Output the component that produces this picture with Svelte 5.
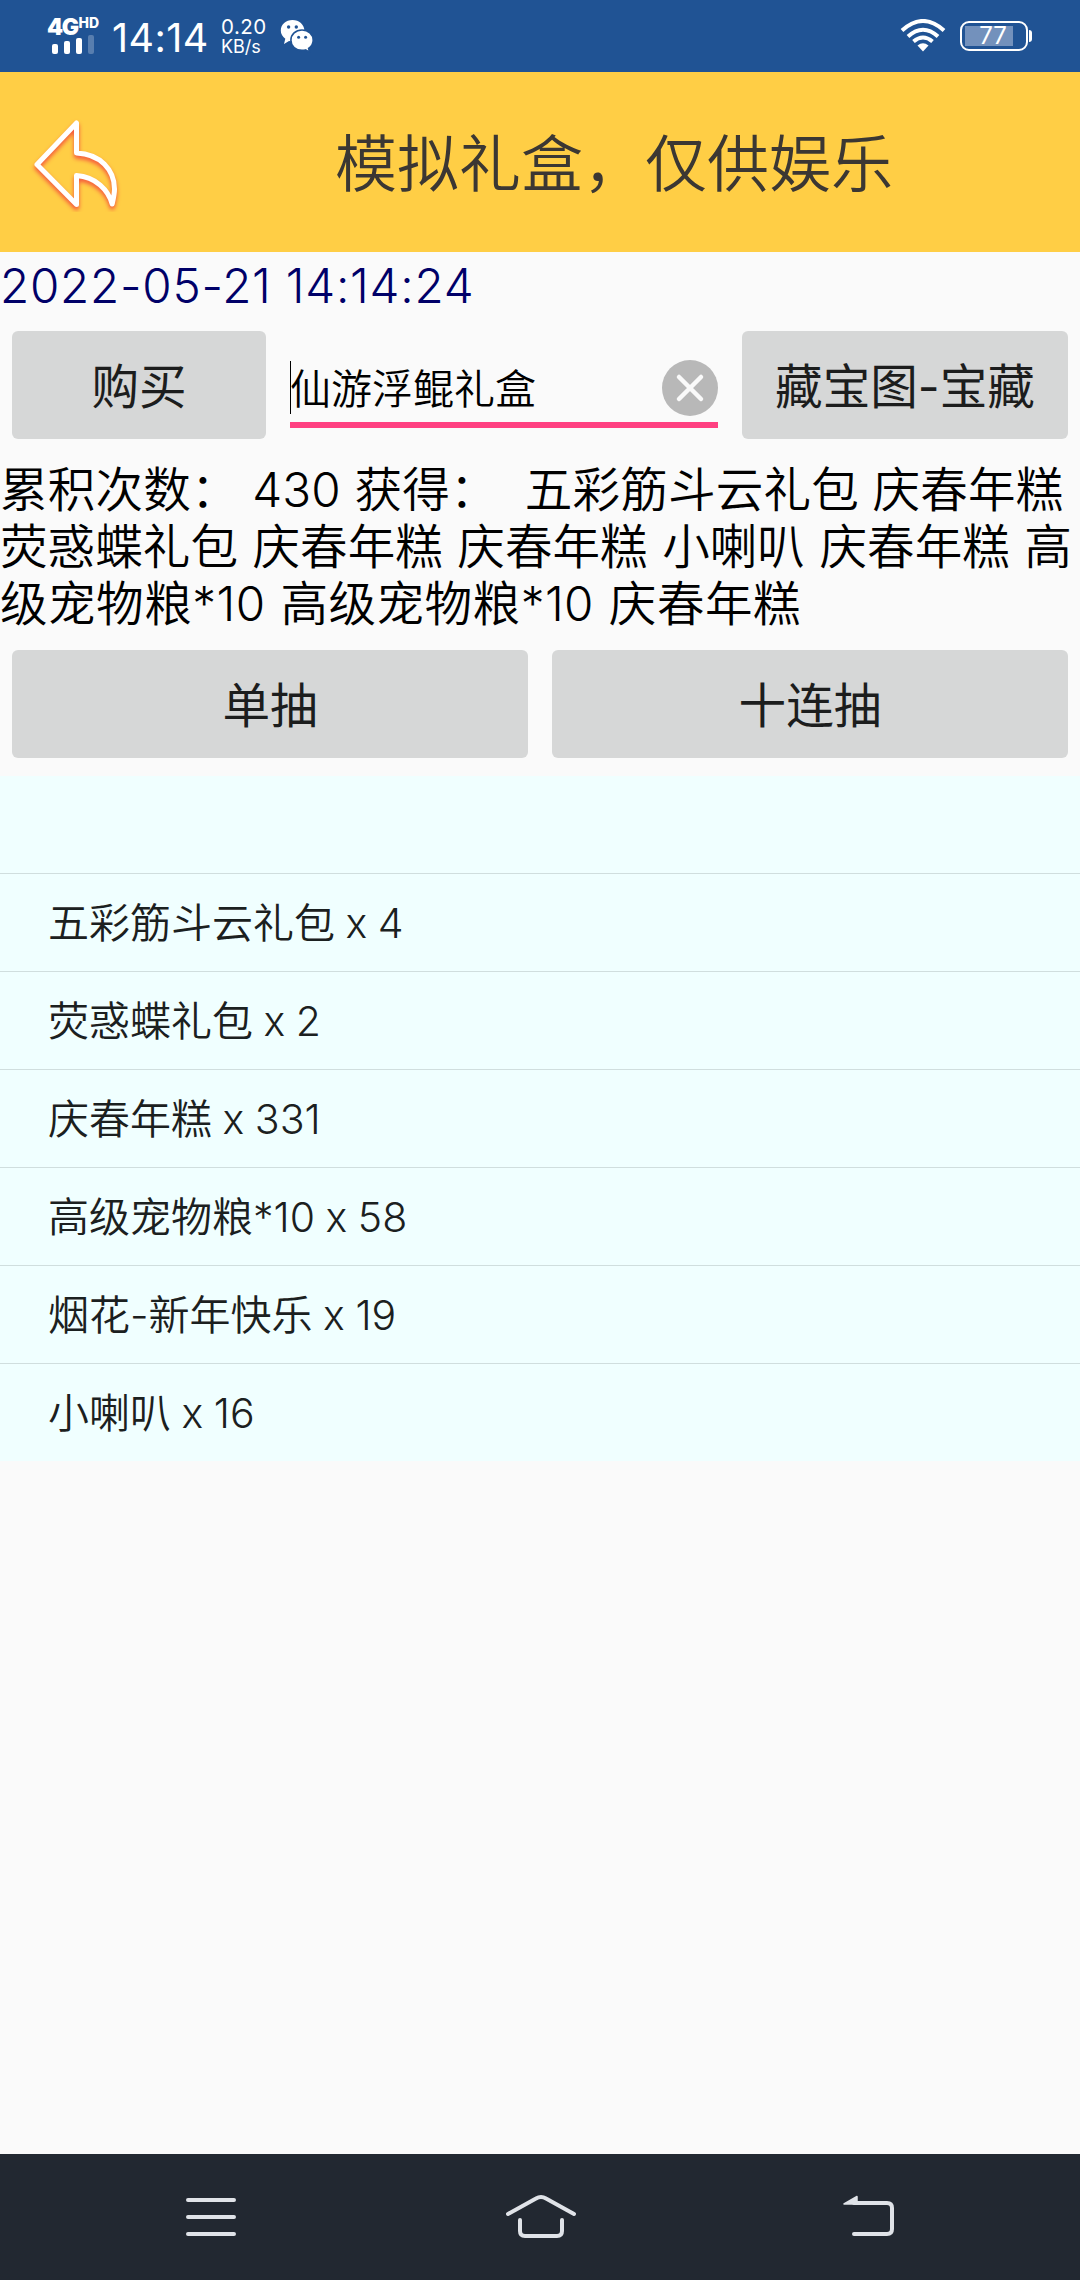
<script lang="ts">
	interface Drop {
		name: string;
		count: number;
	}

	let now = $state('2022-05-21 14:14:24');
	let box = $state('仙游浮鲲礼盒');

	const resultLines = [
		'累积次数： 430 获得：  五彩筋斗云礼包 庆春年糕',
		'荧惑蝶礼包 庆春年糕 庆春年糕 小喇叭 庆春年糕 高',
		'级宠物粮*10 高级宠物粮*10 庆春年糕'
	];

	const drops: Drop[] = [
		{ name: '五彩筋斗云礼包', count: 4 },
		{ name: '荧惑蝶礼包', count: 2 },
		{ name: '庆春年糕', count: 331 },
		{ name: '高级宠物粮*10', count: 58 },
		{ name: '烟花-新年快乐', count: 19 },
		{ name: '小喇叭', count: 16 }
	];
</script>

<div class="screen">
	<div class="status">
		<div class="signal">
			<div class="network">4G<sup>HD</sup></div>
			<svg width="42" height="20" viewBox="0 0 42 20" fill="#fff">
				<rect x="0" y="9" width="6" height="10" rx="2" />
				<rect x="12" y="6" width="6" height="13" rx="2" />
				<rect x="24" y="3" width="6" height="16" rx="2" />
				<rect x="36" y="0" width="6" height="19" rx="2" opacity="0.25" />
			</svg>
		</div>
		<div class="clock">14:14</div>
		<div class="speed">
			<span>0.20</span>
			<span class="unit">KB/s</span>
		</div>
		<svg width="34" height="34" viewBox="0 0 34 34">
			<path
				fill="#fff"
				d="M12.5 1C5.9 1 .8 5.500.8 11.500c0 3.400 1.700 6.200 4.500 8.200L4 25l5-2.900c1.200.3 2.300.4 3.500.4 6.600 0 11.900-4.500 11.900-10.700S19.100 1 12.500 1z"
			/>
			<path
				fill="#fff"
				stroke="#205394"
				stroke-width="1.600"
				d="M22 11c-6.300 0-11.100 4.300-11.100 10.200S15.700 31.400 22 31.400c1.300 0 2.500-.2 3.600-.5l4 2.200-1-3.800c2.800-1.900 4.600-4.700 4.600-8.100C33.200 15.300 28.300 11 22 11z"
			/>
			<g fill="#205394">
				<circle cx="8.600" cy="8" r="1.700" />
				<circle cx="16.300" cy="8" r="1.700" />
				<circle cx="18.600" cy="18.200" r="1.500" />
				<circle cx="25.600" cy="18.200" r="1.500" />
			</g>
		</svg>
		<svg class="wifi" width="46" height="34" viewBox="0 0 46 34">
			<g fill="none" stroke="#fff" stroke-width="4">
				<path d="M2 11.500Q23-7.500 44 11.500" />
				<path d="M8 17.500Q23 4 38 17.500" />
				<path d="M13.500 22.500Q23 14.500 32.500 22.500" />
			</g>
			<path fill="#fff" d="M17.500 26.500Q23 22 28.500 26.500L23 32.500z" />
		</svg>
		<div class="battery"><span>77</span></div>
	</div>

	<header>
		<svg width="96" height="100" viewBox="0 0 96 100">
			<path
				class="back"
				d="M48.500 11v30c24 1 38 17 38 36 0 5-1 9-2.300 15-4-14-16-27-35.700-28.500v29L9 52.500z"
			/>
		</svg>
		<h1>模拟礼盒，仅供娱乐</h1>
	</header>

	<div class="date">{now}</div>

	<div class="row">
		<button class="buy">购买</button>
		<div class="field">
			<span class="value">{box}</span>
			<svg width="56" height="56" viewBox="0 0 56 56">
				<circle cx="28" cy="28" r="28" fill="#b8b8b8" />
				<path d="M17 17l22 22M39 17l-22 22" stroke="#fafafa" stroke-width="4.500" stroke-linecap="round" />
			</svg>
		</div>
		<button class="map">藏宝图-宝藏</button>
	</div>

	<div class="result">
		{#each resultLines as line}
			<span>{line}</span>
		{/each}
	</div>

	<div class="row">
		<button>单抽</button>
		<button>十连抽</button>
	</div>

	<ul>
		<li></li>
		{#each drops as drop}
			<li>{drop.name} x {drop.count}</li>
		{/each}
	</ul>

	<nav>
		<svg width="60" height="50" viewBox="0 0 60 50">
			<path d="M7 8h46M7 25h46M7 42h46" />
		</svg>
		<svg width="70" height="50" viewBox="0 0 70 50">
			<path d="M3 22L31 6.500Q36 3.500 41 6.500L69 22M15 28v11q0 5 5 5h32q5 0 5-5v-11" />
		</svg>
		<svg width="60" height="50" viewBox="0 0 60 50">
			<path d="M15 11h33q5 0 5 5v21q0 5-5 5H15" />
			<path class="tip" d="M5 12L18 4.500V12z" />
		</svg>
	</nav>
</div>

<style>
	:global(body) {
		margin: 0;
	}

	.screen {
		width: 1080px;
		height: 2280px;
		display: flex;
		flex-direction: column;
		overflow: hidden;
		background: #fafafa;
		color: #000;
		font-family: Inter, 'Noto Sans CJK SC', sans-serif;
		font-weight: 350;
		font-size: 47.600px;
	}

	.status {
		height: 72px;
		box-sizing: border-box;
		padding: 0 47px;
		display: flex;
		align-items: center;
		background: #205394;
		color: #fff;
		font-weight: 400;
	}

	.signal {
		width: 53px;
		display: flex;
		flex-direction: column;
		padding-top: 1px;
	}

	.signal svg {
		margin-left: 5px;
	}

	.network {
		display: flex;
		height: 17px;
		font-size: 23px;
		line-height: 18px;
		font-weight: 900;
		letter-spacing: -1.500px;
	}

	.network sup {
		font-size: 14px;
		line-height: 10px;
		font-weight: 800;
		letter-spacing: 0;
		margin-left: 1px;
	}

	.clock {
		width: 109px;
		margin-left: 12px;
		padding-top: 4px;
		font-size: 39.500px;
		line-height: 48px;
		letter-spacing: 0.400px;
		white-space: nowrap;
		font-feature-settings: 'calt' 0;
	}

	.speed {
		width: 59px;
		display: flex;
		flex-direction: column;
		font-size: 20.500px;
		line-height: 20px;
		letter-spacing: 0.500px;
		padding-top: 2px;
	}

	.unit {
		font-size: 18px;
		letter-spacing: 0;
	}

	.wifi {
		margin-left: auto;
	}

	.battery {
		position: relative;
		width: 64px;
		height: 26px;
		margin: 0 5px 0 14px;
		border: 2px solid #fff;
		border-radius: 9px;
		background: linear-gradient(#7391bc, #7391bc) 3px 3px / 48px 20px no-repeat;
		font-size: 24px;
		line-height: 26px;
	}

	.battery span {
		display: block;
		width: 62px;
		text-align: center;
	}

	.battery::after {
		content: '';
		position: absolute;
		right: -6px;
		top: 7px;
		width: 3px;
		height: 12px;
		border-radius: 0 4px 4px 0;
		background: #fff;
	}

	header {
		height: 180px;
		display: flex;
		align-items: center;
		background: #ffce45;
	}

	header svg {
		margin-left: 28px;
	}

	.back {
		fill: none;
		stroke: #fff;
		stroke-width: 5;
		stroke-linejoin: round;
		filter: drop-shadow(0 3px 2px #f4503c);
	}

	h1 {
		flex: 1;
		margin: 0 0 0 24px;
		padding-top: 6px;
		text-align: center;
		font-size: 62px;
		font-weight: 350;
		line-height: 90px;
		color: #3b3733;
	}

	.date {
		height: 67px;
		line-height: 68px;
		letter-spacing: 0.750px;
		color: #000068;
	}

	.row {
		display: flex;
		gap: 24px;
		padding: 12px;
	}

	button {
		flex: 1;
		height: 108px;
		padding: 0 0 3px;
		border: 0;
		border-radius: 6px;
		background: #d6d7d7;
		color: #1c1d1d;
		font: inherit;
		font-weight: 400;
	}

	.buy {
		flex: 0 0 254px;
	}

	.map {
		flex: 0 0 326px;
	}

	.field {
		flex: 1;
		height: 73px;
		margin-top: 24px;
		padding-top: 6px;
		box-sizing: border-box;
		border-bottom: 6px solid #ff4081;
		display: flex;
		align-items: flex-start;
		justify-content: space-between;
	}

	.field svg {
		margin-top: -1px;
	}

	.value {
		height: 53px;
		border-left: 1px solid #000;
		font-size: 41px;
		line-height: 56px;
		text-indent: -1px;
	}

	.result {
		height: 171px;
		margin: 10px 0 6px;
		word-spacing: 1.100px;
	}

	.result span {
		display: block;
		line-height: 57px;
		white-space: pre;
	}

	.result span:first-child {
		word-spacing: 0;
		letter-spacing: 0.150px;
	}

	.result span:last-child {
		letter-spacing: 0.450px;
	}

	ul {
		margin: 6px 0 0;
		padding: 0;
		list-style: none;
		background: #f0ffff;
	}

	li {
		height: 97px;
		padding-left: 48px;
		font-size: 41px;
		line-height: 99px;
		word-spacing: -1px;
		color: #1b2020;
	}

	li + li {
		border-top: 1px solid #d0dede;
	}

	nav {
		height: 126px;
		margin-top: auto;
		display: flex;
		align-items: center;
		justify-content: space-between;
		padding: 0 181px;
		background: #222831;
	}

	nav svg {
		fill: none;
		stroke: #e0e3e8;
		stroke-width: 4;
		stroke-linecap: round;
		stroke-linejoin: round;
		overflow: visible;
	}

	.tip {
		fill: #e0e3e8;
		stroke-width: 1.500;
	}
</style>
